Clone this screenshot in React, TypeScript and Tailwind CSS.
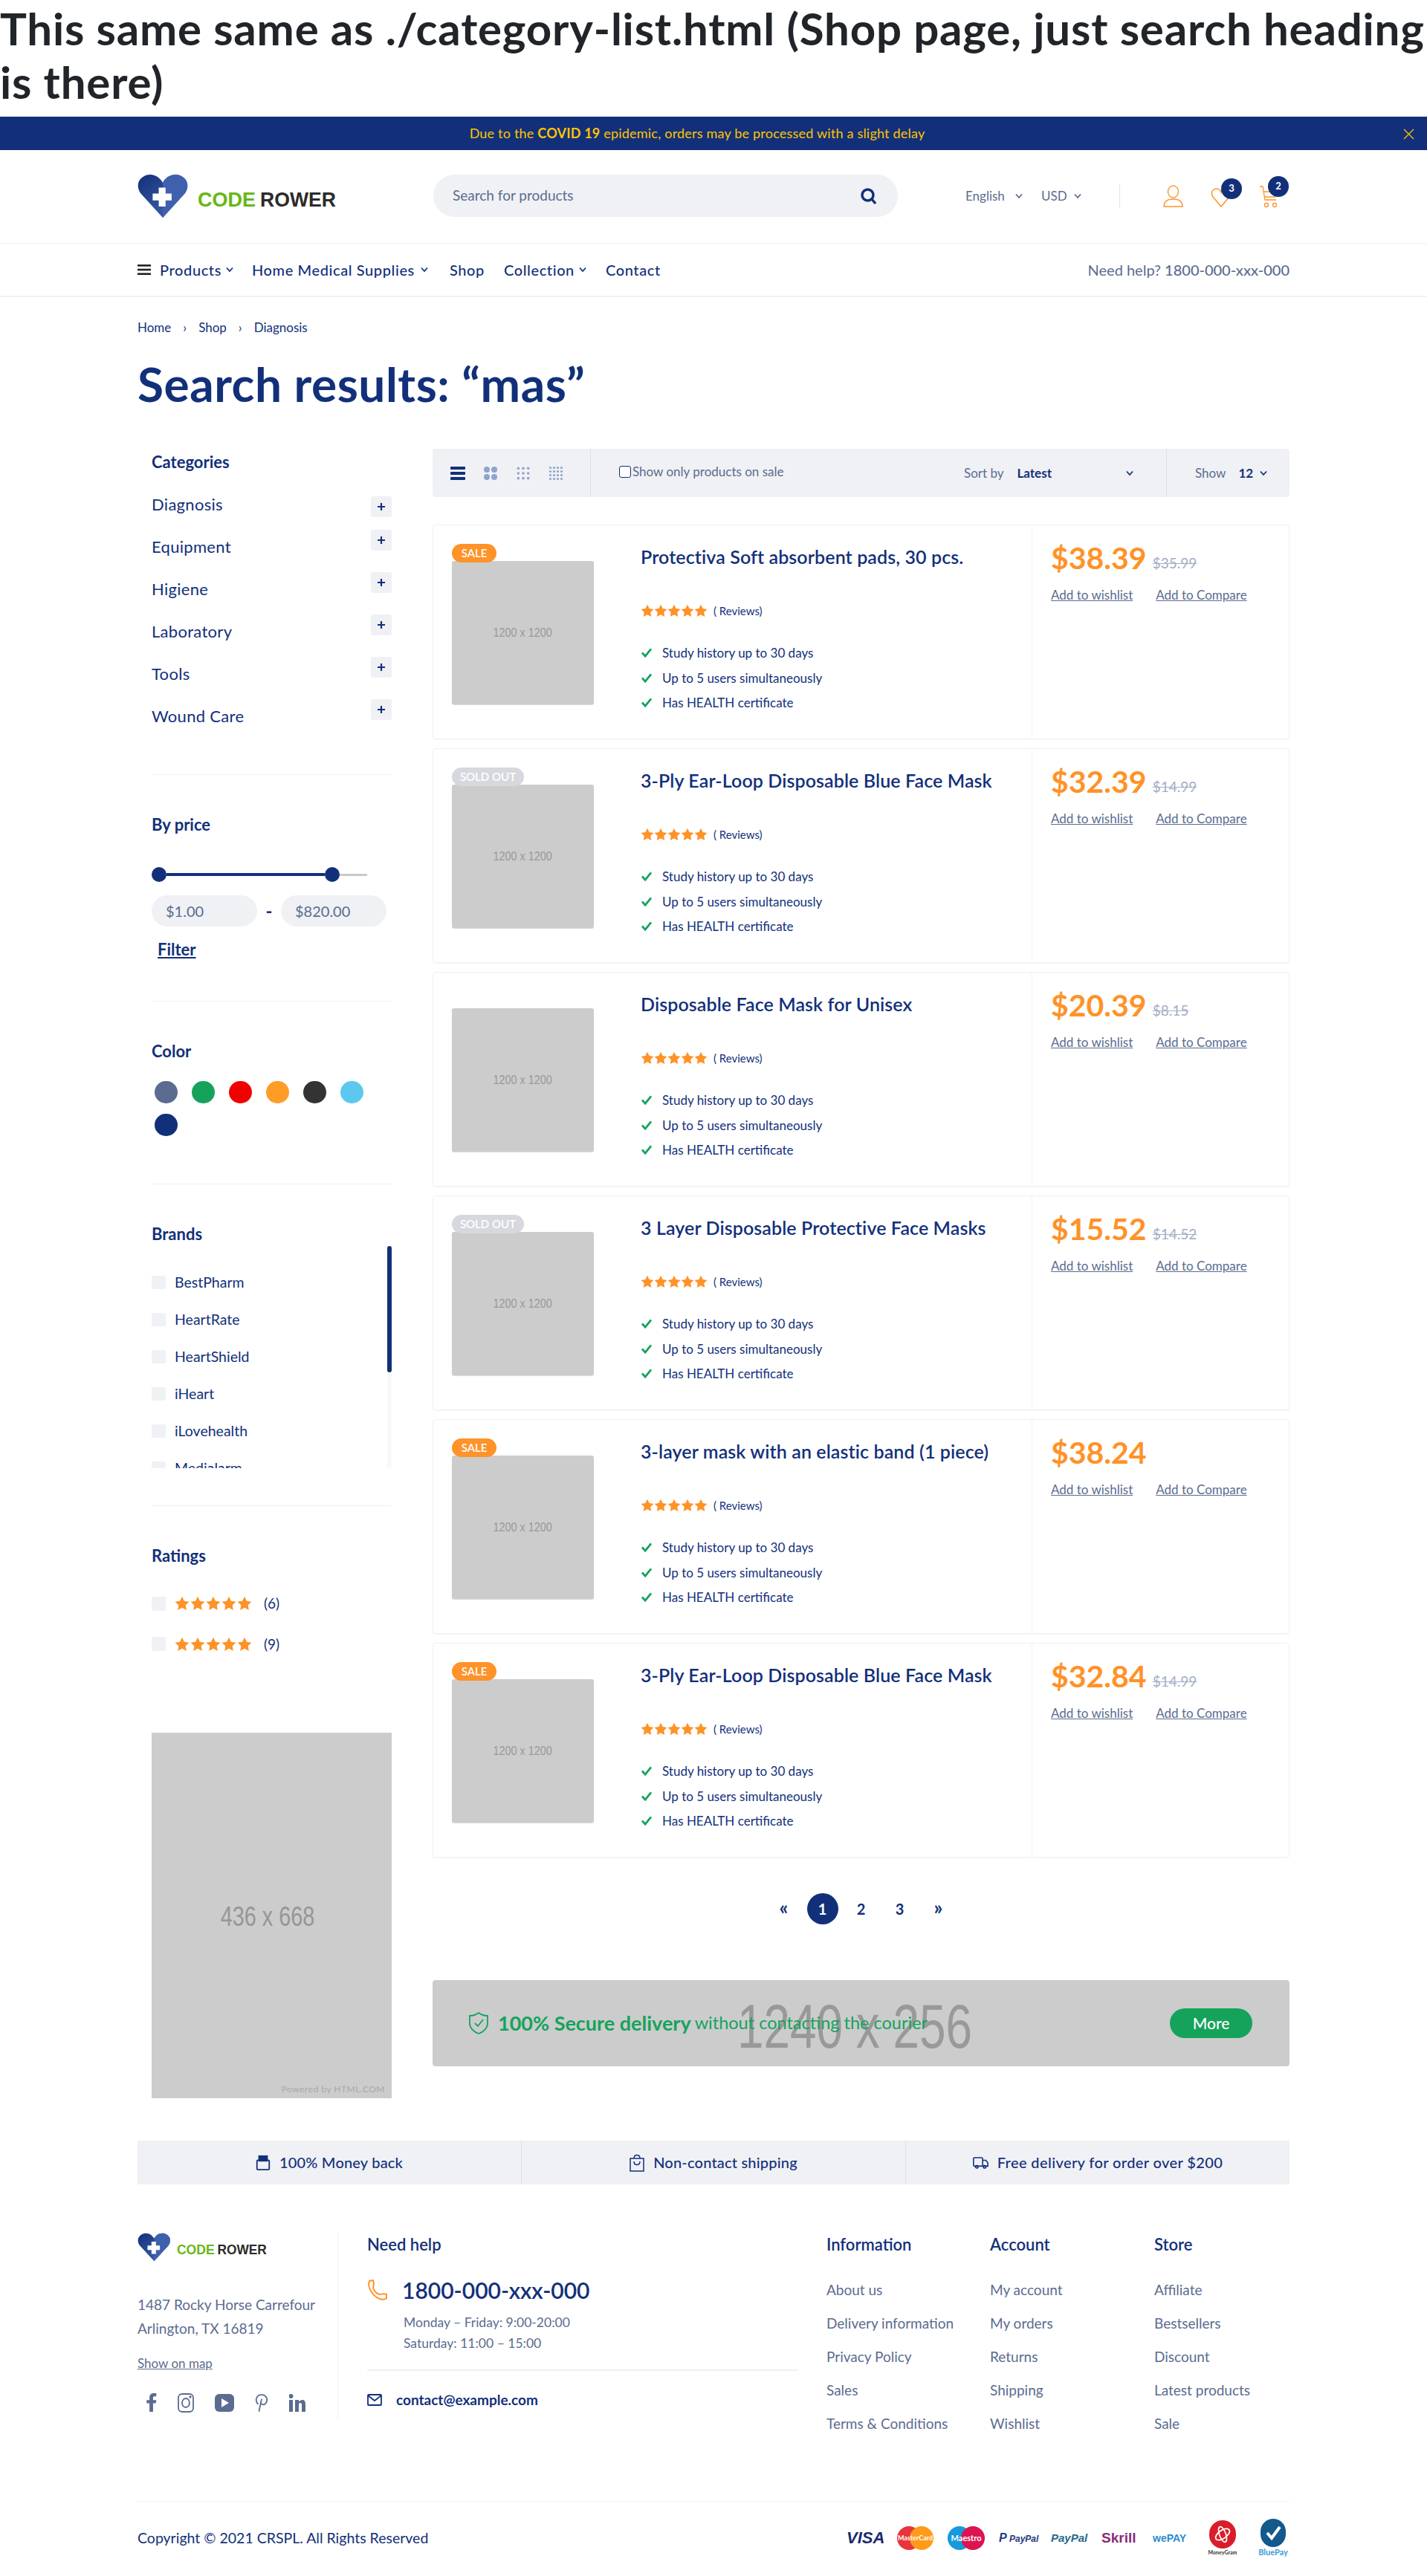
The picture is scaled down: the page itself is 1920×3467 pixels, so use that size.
import React from "react";

const navy = "#12307a";

function Logo({ small }: { small?: boolean }) {
  return (
    <svg viewBox="0 0 270 60" className={small ? "w-[176px] h-[39px] overflow-visible" : "w-[270px] h-[60px] overflow-visible"}>
      <defs>
        <linearGradient id={small ? "lg2" : "lg1"} x1="0" y1="0" x2="1" y2="1">
          <stop offset="0" stopColor="#12307a" />
          <stop offset="1" stopColor="#4a6ab5" />
        </linearGradient>
      </defs>
      <path d="M34 59 L4 26 C-5 12 6 1 17 1 C25 1 31 6 34 12 C37 6 43 1 51 1 C62 1 73 12 64 26 Z" fill={`url(#${small ? "lg2" : "lg1"})`} />
      <path d="M34 12 C37 6 43 1 51 1 C62 1 73 12 64 26 L34 59 Z" fill="#3f61ad" />
      <path d="M29 21h9v8h8v9h-8v8h-9v-8h-8v-9h8z" fill="#fff" transform="translate(-1,-3) scale(1.02)" />
      <text x="81" y="44" fontFamily="'Liberation Sans',sans-serif" fontWeight="700" fontSize="28" fill="#66b814" textLength="78" lengthAdjust="spacingAndGlyphs">CODE</text>
      <text x="165" y="44" fontFamily="'Liberation Sans',sans-serif" fontWeight="700" fontSize="28" fill="#2b2b2b" textLength="102" lengthAdjust="spacingAndGlyphs">ROWER</text>
    </svg>
  );
}

function Chevron({ className }: { className?: string }) {
  return (
    <svg viewBox="0 0 10 8" className={className ?? "w-[9px] h-[7px]"} fill="none" stroke="currentColor" strokeWidth="1.8">
      <path d="M1 1.5 L5 6 L9 1.5" />
    </svg>
  );
}

function Stars({ big }: { big?: boolean }) {
  return (
    <div className={big ? "flex gap-[1px]" : "flex"}>
      {[0, 1, 2, 3, 4].map((i) => (
        <svg key={i} viewBox="0 0 20 20" className={big ? "w-[20px] h-[20px] shrink-0" : "w-[18px] h-[18px] shrink-0"} fill="#ff9228">
          <path d="M10 0.8l2.9 6 6.500.9-4.700 4.600 1.100 6.600L10 15.800l-5.800 3.100 1.100-6.600L.6 7.700l6.500-.9z" />
        </svg>
      ))}
    </div>
  );
}

function Dots({ n, size }: { n: number; size: number }) {
  const step = 20 / n;
  const items: React.ReactNode[] = [];
  for (let r = 0; r < n; r++) for (let c = 0; c < n; c++) items.push(<circle key={`${r}-${c}`} cx={step * c + step / 2} cy={step * r + step / 2} r={size} fill="#8fa3cc" />);
  return (
    <svg viewBox="0 0 20 20" className="w-[20px] h-[20px]">
      {items}
    </svg>
  );
}

function SectionTitle({ children }: { children: React.ReactNode }) {
  return <h3 className="h-[33px] flex items-center text-[22px] font-bold text-[#12307a]">{children}</h3>;
}

const categories = ["Diagnosis", "Equipment", "Higiene", "Laboratory", "Tools", "Wound Care"];
const colors = ["#5b6c90", "#15a35c", "#f20000", "#ff9c28", "#333333", "#5cc8ef", "#12307a"];
const brands = ["BestPharm", "HeartRate", "HeartShield", "iHeart", "iLovehealth", "Medialarm"];

function Sidebar() {
  return (
    <aside className="w-[323px] ml-[19px] mt-[1px] shrink-0">
      <section className="h-[438px] border-b border-[#f0f1f5]">
        <SectionTitle>Categories</SectionTitle>
        <ul className="mt-[12px]">
          {categories.map((c, i) => (
            <li key={c} className="h-[57px] flex items-center justify-between text-[22px] tracking-[0.3px] text-[#12307a]">
              <span>{c}</span>
              <span className={i === 0 ? "w-[28px] h-[28px] mt-[7px] bg-[#f0f1f5] rounded-[3px] flex items-center justify-center" : "w-[28px] h-[28px] mb-[18px] bg-[#f0f1f5] rounded-[3px] flex items-center justify-center"}>
                <svg viewBox="0 0 10 10" className="w-[10px] h-[10px]" stroke={navy} strokeWidth="2.2">
                  <path d="M5 0v10M0 5h10" />
                </svg>
              </span>
            </li>
          ))}
        </ul>
      </section>
      <section className="h-[305px] border-b border-[#f0f1f5] pt-[50px]">
        <SectionTitle>By price</SectionTitle>
        <div className="mt-[41px] w-[290px] h-[20px] flex items-center">
          <span className="w-[20px] h-[20px] rounded-full bg-[#12307a] shrink-0" />
          <span className="w-[213px] h-[4px] bg-[#12307a]" />
          <span className="w-[20px] h-[20px] rounded-full bg-[#12307a] shrink-0" />
          <span className="flex-1 h-[3px] bg-[#c9c9c9]" />
        </div>
        <div className="mt-[18px] flex items-center">
          <span className="w-[142px] h-[42px] rounded-full bg-[#f0f1f5] pl-[19px] flex items-center text-[20px] text-[#5b6c90]">$1.00</span>
          <span className="w-[32px] text-center text-[24px] font-bold text-[#12307a]">-</span>
          <span className="w-[142px] h-[42px] rounded-full bg-[#f0f1f5] pl-[19px] flex items-center text-[20px] text-[#5b6c90]">$820.00</span>
        </div>
        <div className="mt-[19px] ml-[8px] text-[22px] leading-[24px] font-bold underline text-[#12307a]">Filter</div>
      </section>
      <section className="h-[246px] border-b border-[#f0f1f5] pt-[50px]">
        <SectionTitle>Color</SectionTitle>
        <div className="mt-[24px] ml-[4px] w-[315px] flex flex-wrap gap-x-[19px] gap-y-[14px]">
          {colors.map((c) => (
            <span key={c} className="w-[31px] h-[30px] rounded-full" style={{ backgroundColor: c }} />
          ))}
        </div>
      </section>
      <section className="h-[433px] border-b border-[#f0f1f5] pt-[50px]">
        <SectionTitle>Brands</SectionTitle>
        <div className="flex justify-between h-[299px]">
          <ul className="overflow-hidden pt-[24px]">
            {brands.map((b) => (
              <li key={b} className="h-[50px] flex items-center text-[19.5px] text-[#12307a]">
                <span className="w-[19px] h-[18px] rounded-[2px] bg-[#f0f1f5] mr-[12px]" />
                {b}
              </li>
            ))}
          </ul>
          <div className="w-[6px] h-[299px] bg-[#f8f9fb] rounded-[3px]">
            <div className="w-[6px] h-[170px] bg-[#12307a] rounded-[3px]" />
          </div>
        </div>
      </section>
      <section className="h-[305px] pt-[50px]">
        <SectionTitle>Ratings</SectionTitle>
        <div className="mt-[21px]">
          {["(6)", "(9)"].map((c) => (
            <div key={c} className="h-[54.5px] flex items-center text-[19px] text-[#12307a]">
              <span className="w-[19px] h-[19px] rounded-[2px] bg-[#f0f1f5] mr-[12px]" />
              <Stars big />
              <span className="ml-[16px]">{c}</span>
            </div>
          ))}
        </div>
      </section>
      <div className="relative w-[323px] h-[492px] bg-[#cccccc] flex items-center justify-center text-[#969696] font-['Liberation_Sans',sans-serif]">
        <span className="text-[36px] scale-x-[0.8] mr-[10px] mt-[4px]">436 x 668</span>
        <span className="absolute right-[9px] bottom-[3px] text-[12px] tracking-[0.5px] text-[#a8a8a8] font-['Lato',sans-serif]">Powered by HTML.COM</span>
      </div>
    </aside>
  );
}

const products = [
  { badge: "SALE", title: "Protectiva Soft absorbent pads, 30 pcs.", price: "$38.39", old: "$35.99" },
  { badge: "SOLD OUT", title: "3-Ply Ear-Loop Disposable Blue Face Mask", price: "$32.39", old: "$14.99" },
  { badge: "", title: "Disposable Face Mask for Unisex", price: "$20.39", old: "$8.15" },
  { badge: "SOLD OUT", title: "3 Layer Disposable Protective Face Masks", price: "$15.52", old: "$14.52" },
  { badge: "SALE", title: "3-layer mask with an elastic band (1 piece)", price: "$38.24", old: "" },
  { badge: "SALE", title: "3-Ply Ear-Loop Disposable Blue Face Mask", price: "$32.84", old: "$14.99" },
];

function Card({ p }: { p: (typeof products)[number] }) {
  return (
    <article className="h-[289px] mb-[12px] flex rounded-[4px] border border-[#f0f1f5] shadow-[0_1px_1px_rgba(0,0,0,0.04)]">
      <div className="w-[805px] flex pl-[25px] pt-[25px]">
        <div className="w-[191px] shrink-0">
          <div className="relative z-10 h-[23px]">
            {p.badge === "SALE" && <span className="inline-flex w-[60px] h-[25px] items-center justify-center rounded-full bg-[#ff9228] text-white text-[15px] font-semibold">SALE</span>}
            {p.badge === "SOLD OUT" && <span className="inline-flex w-[97px] h-[25px] items-center justify-center rounded-full bg-[#d6d8de] text-white text-[15px] font-semibold">SOLD OUT</span>}
          </div>
          <div className="h-[193px] bg-[#cccccc] rounded-[3px] shadow-[0_1px_1px_rgba(0,0,0,0.15)] flex items-center justify-center text-[16px] text-[#999999] font-['Liberation_Sans',sans-serif]">
            <span className="scale-x-[0.9]">1200 x 1200</span>
          </div>
        </div>
        <div className="ml-[63px] flex-1 text-[#12307a]">
          <h4 className="h-[36px] flex items-center text-[25px] tracking-[0.1px] font-semibold whitespace-nowrap">{p.title}</h4>
          <div className="mt-[42px] h-[24px] flex items-center gap-[8px] text-[15px]">
            <Stars />
            <span>( Reviews)</span>
          </div>
          <ul className="mt-[28px] text-[17px]">
            {["Study history up to 30 days", "Up to 5 users simultaneously", "Has HEALTH certificate"].map((f) => (
              <li key={f} className="h-[33.5px] flex items-center">
                <svg viewBox="0 0 16 14" className="w-[16px] h-[13px] mr-[13px]" fill="none" stroke="#15a35c" strokeWidth="3">
                  <path d="M1.500 7 L6 12 L14.500 1.500" />
                </svg>
                {f}
              </li>
            ))}
          </ul>
        </div>
      </div>
      <div className="flex-1 border-l border-[#f0f1f5] pl-[25px] pt-[22px]">
        <div className="h-[44px] flex items-end gap-[8px]">
          <span className="text-[41px] leading-[44px] font-bold text-[#ff9228]">{p.price}</span>
          {p.old && <span className="text-[19px] leading-[30px] line-through text-[#a3aec6]">{p.old}</span>}
        </div>
        <div className="mt-[15px] flex gap-[31px] text-[17px] underline text-[#5b6c90] whitespace-nowrap">
          <span>Add to wishlist</span>
          <span>Add to Compare</span>
        </div>
      </div>
    </article>
  );
}

function ContentArea() {
  return (
    <main className="ml-[55px] w-[1153px] shrink-0">
      <div className="h-[65px] bg-[#f0f1f5] rounded-[4px] flex items-center text-[17px] text-[#5b6c90]">
        <div className="w-[213px] h-full border-r border-[#dfe1e8] flex items-center pl-[24px] gap-[24px]">
          <svg viewBox="0 0 20 20" className="w-[20px] h-[20px]" fill={navy}>
            <rect y="1" width="20" height="4" rx="1" />
            <rect y="8" width="20" height="4" rx="1" />
            <rect y="15" width="20" height="4" rx="1" />
          </svg>
          <Dots n={2} size={4} />
          <Dots n={3} size={1.8} />
          <Dots n={4} size={1.6} />
        </div>
        <div className="flex-1 h-full flex items-center pl-[38px]">
          <span className="w-[16px] h-[16px] border border-[#12307a] rounded-[3px] bg-white mr-[2px] mb-[4px]" />
          <span className="mb-[4px]">Show only products on sale</span>
          <span className="ml-auto">Sort by</span>
          <span className="ml-[18px] font-bold text-[#12307a]">Latest</span>
          <Chevron className="ml-[100px] mr-[44px] w-[10px] h-[8px] text-[#12307a]" />
        </div>
        <div className="w-[166px] h-full border-l border-[#dfe1e8] flex items-center pl-[38px]">
          <span>Show</span>
          <span className="ml-[17px] font-bold text-[#12307a]">12</span>
          <Chevron className="ml-[9px] w-[10px] h-[8px] text-[#12307a]" />
        </div>
      </div>
      <div className="mt-[37px]">
        {products.map((p, i) => (
          <Card key={i} p={p} />
        ))}
      </div>
      <div className="mt-[48px] h-[42px] flex items-center justify-center gap-[10px] text-[20px] font-bold text-[#12307a]">
        <span className="w-[42px] text-center text-[26px] leading-[30px] pb-[4px]">«</span>
        <span className="w-[42px] h-[42px] rounded-full bg-[#12307a] text-white flex items-center justify-center">1</span>
        <span className="w-[42px] text-center">2</span>
        <span className="w-[42px] text-center">3</span>
        <span className="w-[42px] text-center text-[26px] leading-[30px] pb-[4px]">»</span>
      </div>
      <div className="relative mt-[75px] h-[116px] rounded-[4px] bg-[#cccccc] flex items-center justify-between pl-[49px] pr-[50px]">
        <span className="absolute left-[410px] top-[12px] text-[84px] leading-[100px] text-[#999999] font-['Liberation_Sans',sans-serif] origin-left scale-x-[0.76] whitespace-nowrap">1240 x 256</span>
        <div className="relative flex items-center text-[23.5px] text-[#15a35c] whitespace-nowrap">
          <svg viewBox="0 0 26 30" className="w-[26px] h-[30px] mr-[13px]" fill="none" stroke="#15a35c" strokeWidth="1.8">
            <path d="M13 1 C17 4 21 5 25 5 V15 C25 22 19 27 13 29 C7 27 1 22 1 15 V5 C5 5 9 4 13 1 Z" />
            <path d="M8 15 L12 19 L19 10" />
          </svg>
          <b className="font-bold text-[27px]">100% Secure delivery</b>
          <span className="ml-[5px]">without contacting the courier</span>
        </div>
        <span className="relative w-[111px] h-[40px] rounded-full bg-[#15a35c] text-white text-[21px] font-medium flex items-center justify-center">More</span>
      </div>
    </main>
  );
}

function StripItem({ children, icon, border }: { children: React.ReactNode; icon: React.ReactNode; border?: boolean }) {
  return (
    <div className={border ? "flex-1 flex items-center justify-center gap-[12px] border-l border-[#dfe1e8]" : "flex-1 flex items-center justify-center gap-[12px]"}>
      {icon}
      <span className="pb-[2px]">{children}</span>
    </div>
  );
}

function FooterCol({ title, links, className }: { title: string; links: string[]; className: string }) {
  return (
    <div className={className}>
      <h5 className="h-[30px] flex items-center text-[22px] font-semibold text-[#12307a]">{title}</h5>
      <ul className="mt-[25px]">
        {links.map((l) => (
          <li key={l} className="h-[45px] flex items-center text-[19px] text-[#5b6c90]">
            {l}
          </li>
        ))}
      </ul>
    </div>
  );
}

function Payments() {
  return (
    <div className="flex items-center h-[52px]">
      <span className="w-[49px] mr-[19px] text-[22px] leading-[26px] font-bold italic text-[#1a2a6c] font-['Liberation_Sans',sans-serif]">VISA</span>
      <span className="relative w-[49px] h-[32px] mr-[19px]">
        <span className="absolute left-0 top-0 w-[32px] h-[32px] rounded-full bg-[#e8343a]" />
        <span className="absolute right-0 top-0 w-[32px] h-[32px] rounded-full bg-[#ff9a1a]" />
        <span className="absolute inset-0 flex items-center justify-center text-[9px] text-white font-bold">MasterCard</span>
      </span>
      <span className="relative w-[50px] h-[32px] mr-[19px]">
        <span className="absolute left-0 top-0 w-[32px] h-[32px] rounded-full bg-[#1799dc]" />
        <span className="absolute right-0 top-0 w-[32px] h-[32px] rounded-full bg-[#dc1450]" />
        <span className="absolute inset-0 flex items-center justify-center text-[11px] text-white font-bold">Maestro</span>
      </span>
      <span className="w-[50px] mr-[20px] text-[12px] font-bold italic text-[#25397f] whitespace-nowrap font-['Liberation_Sans',sans-serif]"><span className="text-[16px]">P</span> PayPal</span>
      <span className="w-[49px] mr-[19px] text-[15px] font-bold italic text-[#276a8a] font-['Liberation_Sans',sans-serif]">PayPal</span>
      <span className="w-[49px] mr-[20px] text-[19px] font-bold text-[#8a2a79] font-['Liberation_Sans',sans-serif]">Skrill</span>
      <span className="w-[48px] mr-[26px] text-[14px] font-bold text-[#2d8ccd] font-['Liberation_Sans',sans-serif]">wePAY</span>
      <span className="w-[40px] mr-[26px] flex flex-col items-center">
        <span className="w-[36px] h-[38px] rounded-full bg-[#d81e2a] flex items-center justify-center">
          <svg viewBox="0 0 24 24" className="w-[26px] h-[26px]" fill="none" stroke="#fff" strokeWidth="1.6">
            <ellipse cx="12" cy="12" rx="10" ry="5" transform="rotate(-35 12 12)" />
            <ellipse cx="12" cy="12" rx="4" ry="10" transform="rotate(-20 12 12)" />
          </svg>
        </span>
        <span className="text-[7px] leading-[10px] font-bold text-[#333] whitespace-nowrap">MoneyGram</span>
      </span>
      <span className="w-[44px] flex flex-col items-center">
        <span className="w-[34px] h-[38px] rounded-full bg-[#14598c] flex items-center justify-center">
          <svg viewBox="0 0 24 24" className="w-[24px] h-[24px]" fill="none" stroke="#fff" strokeWidth="4">
            <path d="M4 12 L10 19 L21 4" />
          </svg>
        </span>
        <span className="text-[11px] leading-[14px] font-bold text-[#3d9ad6] whitespace-nowrap">BluePay</span>
      </span>
    </div>
  );
}

export default function App() {
  return (
    <div className="w-[1920px] h-[3467px] bg-white overflow-hidden text-[#12307a] font-['Lato','Noto_Sans',sans-serif]">
      <h1 className="h-[157px] pt-[2px] text-[60px] leading-[72px] font-bold text-[#212529] tracking-[0.8px] whitespace-nowrap">
        This same same as ./category-list.html (Shop page, just search heading
        <br />
        is there)
      </h1>
      <div className="relative h-[45px] pr-[44px] bg-[#12307a] flex items-center justify-center text-[18px] tracking-[0.2px] text-[#ffc400]">
        <span>
          Due to the <b className="font-bold">COVID 19</b> epidemic, orders may be processed with a slight delay
        </span>
        <svg viewBox="0 0 14 14" className="absolute right-[17px] top-[16px] w-[15px] h-[15px]" stroke="#ffc400" strokeWidth="1.2">
          <path d="M1 1 L13 13 M13 1 L1 13" />
        </svg>
      </div>
      <header className="h-[126px] border-b border-[#f0f1f5]">
        <div className="w-[1550px] mx-auto h-full flex items-center pb-[2px]">
          <div className="w-[398px] shrink-0">
            <Logo />
          </div>
          <div className="w-[625px] h-[57px] shrink-0 rounded-full bg-[#f0f1f5] flex items-center justify-between pl-[26px] pr-[27px] text-[19px] text-[#5b6c90]">
            <span>Search for products</span>
            <svg viewBox="0 0 24 24" className="w-[24px] h-[24px]" fill="none" stroke={navy} strokeWidth="3.5">
              <circle cx="10.500" cy="10.500" r="7.500" />
              <path d="M16 16 L21 22" />
            </svg>
          </div>
          <div className="ml-[91px] w-[207px] shrink-0 flex items-center text-[17px] text-[#5b6c90]">
            <span className="w-[55px]">English</span>
            <Chevron className="ml-[12px] w-[10px] h-[8px]" />
            <span className="ml-[25px] w-[32px]">USD</span>
            <Chevron className="ml-[12px] w-[10px] h-[8px]" />
          </div>
          <span className="w-px h-[32px] bg-[#e2e4ea] shrink-0" />
          <div className="relative ml-[58px] w-[170px] h-[30px] shrink-0">
            <svg viewBox="0 0 27 30" className="absolute left-0 top-0 w-[27px] h-[30px]" fill="none" stroke="#ff9228" strokeWidth="1.4">
              <ellipse cx="13.500" cy="9" rx="7" ry="8" />
              <path d="M1 29 C1 21 7 19 13.500 19 C20 19 26 21 26 29 Z" />
            </svg>
            <svg viewBox="0 0 28 26" className="absolute left-[64px] top-[4px] w-[28px] h-[26px]" fill="none" stroke="#ff9228" strokeWidth="1.5">
              <path d="M14 25 L3 12 C-1 6 3 1 8 1 C11 1 13 3 14 6 C15 3 17 1 20 1 C25 1 29 6 25 12 Z" />
            </svg>
            <svg viewBox="0 0 26 30" className="absolute left-[129px] top-[1px] w-[26px] h-[30px]" fill="none" stroke="#ff9228" strokeWidth="1.3">
              <path d="M1 1 H5 L8 19 H23 M6 8 H24 L22 15 H7" />
              <circle cx="10" cy="26" r="2.500" />
              <circle cx="21" cy="26" r="2.500" />
            </svg>
            <span className="absolute left-[78px] -top-[9px] w-[28px] h-[28px] rounded-full bg-[#12307a] text-white text-[13px] font-bold flex items-center justify-center">3</span>
            <span className="absolute left-[141px] -top-[12px] w-[28px] h-[28px] rounded-full bg-[#12307a] text-white text-[13px] font-bold flex items-center justify-center">2</span>
          </div>
        </div>
      </header>
      <nav className="h-[72px] border-b-2 border-[#f0f1f5]">
        <div className="w-[1550px] mx-auto h-full flex items-center text-[20px] tracking-[0.6px] font-medium text-[#12307a] whitespace-nowrap pb-[1px]">
          <div className="w-[154px] flex items-center">
            <svg viewBox="0 0 18 14" className="w-[18px] h-[14px] mr-[12px]" fill="#222">
              <rect width="18" height="2.600" />
              <rect y="5.700" width="18" height="2.600" />
              <rect y="11.400" width="18" height="2.600" />
            </svg>
            <span>Products</span>
            <Chevron className="ml-[6px] w-[10px] h-[8px]" />
          </div>
          <div className="w-[266px] flex items-center">
            <span>Home Medical Supplies</span>
            <Chevron className="ml-[8px] w-[10px] h-[8px]" />
          </div>
          <span className="w-[73px]">Shop</span>
          <div className="w-[137px] flex items-center">
            <span>Collection</span>
            <Chevron className="ml-[6px] w-[10px] h-[8px]" />
          </div>
          <span>Contact</span>
          <span className="ml-auto text-[#5b6c90] font-normal text-[20px] tracking-normal">
            Need help? <span className="font-medium">1800-000-xxx-000</span>
          </span>
        </div>
      </nav>
      <div className="w-[1550px] mx-auto">
        <div className="pt-[28px] h-[54px] flex items-center text-[17px] text-[#12307a]">
          <span>Home</span>
          <span className="mx-[16px]">›</span>
          <span>Shop</span>
          <span className="mx-[16px]">›</span>
          <span>Diagnosis</span>
        </div>
        <h2 className="mt-[23px] h-[80px] flex items-center text-[64px] tracking-[0.5px] font-bold text-[#12307a] whitespace-nowrap">Search results: “mas”</h2>
        <div className="mt-[47px] flex">
          <Sidebar />
          <ContentArea />
        </div>
        <div className="mt-[57px] h-[59px] bg-[#f0f1f5] flex text-[20px] tracking-[0.2px] font-medium text-[#12307a]">
          <StripItem
            icon={
              <svg viewBox="0 0 20 24" className="w-[20px] h-[22px]" fill="none" stroke={navy} strokeWidth="2">
                <rect x="1" y="8" width="18" height="14" rx="1.500" />
                <rect x="4" y="2" width="12" height="7" fill={navy} />
              </svg>
            }
          >
            100% Money back
          </StripItem>
          <StripItem
            border
            icon={
              <svg viewBox="0 0 20 24" className="w-[20px] h-[24px]" fill="none" stroke={navy} strokeWidth="1.500">
                <rect x="1" y="6" width="18" height="17" />
                <path d="M6 6 C6 0 14 0 14 6 M6 10 C6 16 14 16 14 10" />
              </svg>
            }
          >
            Non-contact shipping
          </StripItem>
          <StripItem
            border
            icon={
              <svg viewBox="0 0 24 18" className="w-[21px] h-[16px]" fill="none" stroke={navy} strokeWidth="1.800">
                <rect x="1" y="1" width="14" height="13" rx="1.500" />
                <path d="M15 5h5l3 4v5h-8" />
                <circle cx="6" cy="15" r="2" />
                <circle cx="18" cy="15" r="2" />
              </svg>
            }
          >
            <span className="tracking-[0.4px]">Free delivery for order over $200</span>
          </StripItem>
        </div>
        <div className="mt-[65px] h-[361px] flex">
          <div className="w-[270px] h-[253px] border-r border-[#f0f1f5] shrink-0">
            <Logo small />
            <p className="mt-[42px] text-[19px] leading-[32px] text-[#5b6c90] whitespace-nowrap">
              1487 Rocky Horse Carrefour
              <br />
              Arlington, TX 16819
            </p>
            <div className="mt-[18px] text-[17px] underline text-[#5b6c90]">Show on map</div>
            <div className="mt-[26px] ml-[12px] flex items-center gap-[28px] text-[#5b6c90]">
              <svg viewBox="0 0 14 26" className="w-[14px] h-[25px]" fill="#5b6c90">
                <path d="M4 26V14H0V9.500h4V6c0-4 2.500-6 6-6h3.500v4.500H11c-1.500 0-2 .8-2 2v3h4.500L13 14H9v12z" />
              </svg>
              <svg viewBox="0 0 22 26" className="w-[22px] h-[26px]" fill="none" stroke="#5b6c90" strokeWidth="1.800">
                <rect x="1" y="1" width="20" height="24" rx="5" />
                <ellipse cx="11" cy="13" rx="5" ry="6" />
                <circle cx="17" cy="5" r=".8" />
              </svg>
              <svg viewBox="0 0 26 24" className="w-[26px] h-[24px]" fill="#5b6c90">
                <rect width="26" height="24" rx="6" />
                <path d="M9 6 L19 12 L9 18 Z" fill="#fff" />
              </svg>
              <svg viewBox="0 0 20 28" className="w-[18px] h-[28px]" fill="none" stroke="#5b6c90" strokeWidth="2">
                <path d="M5 16 C0 12 1 2 10 2 C18 2 20 10 16 15 C13 18 9 16 9 14 M10 8 L6 27" />
              </svg>
              <svg viewBox="0 0 22 24" className="w-[22px] h-[24px]" fill="#5b6c90">
                <rect y="8" width="5" height="16" />
                <circle cx="2.500" cy="3" r="3" />
                <path d="M8 8h5v2.500C14 9 16 8 18 8c3 0 4 2.500 4 5.500V24h-5v-9c0-2-.5-3-2-3s-2 1.200-2 3v9H8z" />
              </svg>
            </div>
          </div>
          <div className="ml-[39px] w-[580px] shrink-0">
            <h5 className="h-[30px] flex items-center text-[22px] font-semibold text-[#12307a]">Need help</h5>
            <div className="mt-[27px] flex items-center">
              <svg viewBox="0 0 28 28" className="w-[28px] h-[28px] mr-[19px]" fill="none" stroke="#ff9228" strokeWidth="2">
                <path d="M3 2 L8 1 C10 8 8 9 8 11 C9 15 13 20 18 20 C20 20 21 18 26 20 L26 25 C24 27 20 27 17 26 C9 23 3 15 2 6 Z" />
              </svg>
              <span className="text-[30px] leading-[40px] font-semibold text-[#12307a]">1800-000-xxx-000</span>
            </div>
            <div className="mt-[10px] ml-[49px] text-[17.5px] leading-[28px] text-[#5b6c90]">
              Monday – Friday: 9:00-20:00
              <br />
              Saturday: 11:00 – 15:00
            </div>
            <div className="mt-[21px] border-t-2 border-[#f0f1f5] pt-[25px] flex items-center text-[19px] font-bold text-[#12307a]">
              <svg viewBox="0 0 20 16" className="w-[20px] h-[16px] mr-[19px]" fill="none" stroke={navy} strokeWidth="1.800">
                <rect x="1" y="1" width="18" height="14" rx="1" />
                <path d="M1 2 L10 9 L19 2" />
              </svg>
              contact@example.com
            </div>
          </div>
          <FooterCol className="ml-[38px] w-[220px] shrink-0" title="Information" links={["About us", "Delivery information", "Privacy Policy", "Sales", "Terms & Conditions"]} />
          <FooterCol className="w-[221px] shrink-0" title="Account" links={["My account", "My orders", "Returns", "Shipping", "Wishlist"]} />
          <FooterCol className="flex-1" title="Store" links={["Affiliate", "Bestsellers", "Discount", "Latest products", "Sale"]} />
        </div>
        <div className="h-[99px] border-t border-[#f0f1f5] flex items-center justify-between">
          <span className="text-[19.5px] text-[#12307a]">Copyright © 2021 CRSPL. All Rights Reserved</span>
          <Payments />
        </div>
      </div>
    </div>
  );
}
